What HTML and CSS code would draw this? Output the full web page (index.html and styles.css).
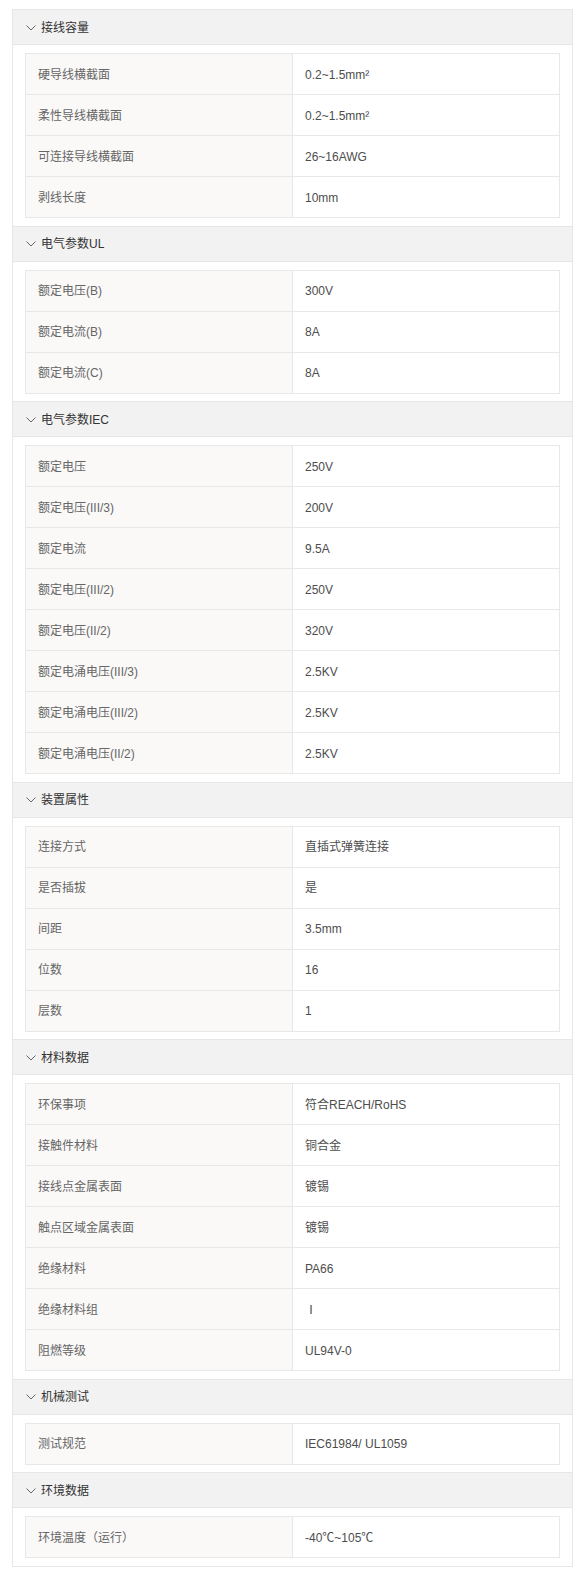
FILE: index.html
```html
<!DOCTYPE html>
<html lang="zh">
<head>
    <meta charset="UTF-8">
    <meta name="viewport" content="width=device-width, initial-scale=1.0">
    <title>技术参数</title>
    <link rel="stylesheet" href="styles.css">
</head>
<body>
    <div class="spec">
        <div class="group">
            <div class="group-head"><svg class="chev" viewBox="0 0 10 6"><polyline points="0.5,0.5 5,5 9.5,0.5"/></svg><span>接线容量</span></div>
            <div class="group-body">
                <table class="spec-table">
                    <tr><td class="k">硬导线横截面</td><td class="v">0.2~1.5mm²</td></tr>
                    <tr><td class="k">柔性导线横截面</td><td class="v">0.2~1.5mm²</td></tr>
                    <tr><td class="k">可连接导线横截面</td><td class="v">26~16AWG</td></tr>
                    <tr><td class="k">剥线长度</td><td class="v">10mm</td></tr>
                </table>
            </div>
        </div>
        <div class="group">
            <div class="group-head"><svg class="chev" viewBox="0 0 10 6"><polyline points="0.5,0.5 5,5 9.5,0.5"/></svg><span>电气参数UL</span></div>
            <div class="group-body">
                <table class="spec-table">
                    <tr><td class="k">额定电压(B)</td><td class="v">300V</td></tr>
                    <tr><td class="k">额定电流(B)</td><td class="v">8A</td></tr>
                    <tr><td class="k">额定电流(C)</td><td class="v">8A</td></tr>
                </table>
            </div>
        </div>
        <div class="group">
            <div class="group-head"><svg class="chev" viewBox="0 0 10 6"><polyline points="0.5,0.5 5,5 9.5,0.5"/></svg><span>电气参数IEC</span></div>
            <div class="group-body">
                <table class="spec-table">
                    <tr><td class="k">额定电压</td><td class="v">250V</td></tr>
                    <tr><td class="k">额定电压(III/3)</td><td class="v">200V</td></tr>
                    <tr><td class="k">额定电流</td><td class="v">9.5A</td></tr>
                    <tr><td class="k">额定电压(III/2)</td><td class="v">250V</td></tr>
                    <tr><td class="k">额定电压(II/2)</td><td class="v">320V</td></tr>
                    <tr><td class="k">额定电涌电压(III/3)</td><td class="v">2.5KV</td></tr>
                    <tr><td class="k">额定电涌电压(III/2)</td><td class="v">2.5KV</td></tr>
                    <tr><td class="k">额定电涌电压(II/2)</td><td class="v">2.5KV</td></tr>
                </table>
            </div>
        </div>
        <div class="group">
            <div class="group-head"><svg class="chev" viewBox="0 0 10 6"><polyline points="0.5,0.5 5,5 9.5,0.5"/></svg><span>装置属性</span></div>
            <div class="group-body">
                <table class="spec-table">
                    <tr><td class="k">连接方式</td><td class="v">直插式弹簧连接</td></tr>
                    <tr><td class="k">是否插拔</td><td class="v">是</td></tr>
                    <tr><td class="k">间距</td><td class="v">3.5mm</td></tr>
                    <tr><td class="k">位数</td><td class="v">16</td></tr>
                    <tr><td class="k">层数</td><td class="v">1</td></tr>
                </table>
            </div>
        </div>
        <div class="group">
            <div class="group-head"><svg class="chev" viewBox="0 0 10 6"><polyline points="0.5,0.5 5,5 9.5,0.5"/></svg><span>材料数据</span></div>
            <div class="group-body">
                <table class="spec-table">
                    <tr><td class="k">环保事项</td><td class="v">符合REACH/RoHS</td></tr>
                    <tr><td class="k">接触件材料</td><td class="v">铜合金</td></tr>
                    <tr><td class="k">接线点金属表面</td><td class="v">镀锡</td></tr>
                    <tr><td class="k">触点区域金属表面</td><td class="v">镀锡</td></tr>
                    <tr><td class="k">绝缘材料</td><td class="v">PA66</td></tr>
                    <tr><td class="k">绝缘材料组</td><td class="v">Ⅰ</td></tr>
                    <tr><td class="k">阻燃等级</td><td class="v">UL94V-0</td></tr>
                </table>
            </div>
        </div>
        <div class="group">
            <div class="group-head"><svg class="chev" viewBox="0 0 10 6"><polyline points="0.5,0.5 5,5 9.5,0.5"/></svg><span>机械测试</span></div>
            <div class="group-body">
                <table class="spec-table">
                    <tr><td class="k">测试规范</td><td class="v">IEC61984/ UL1059</td></tr>
                </table>
            </div>
        </div>
        <div class="group">
            <div class="group-head"><svg class="chev" viewBox="0 0 10 6"><polyline points="0.5,0.5 5,5 9.5,0.5"/></svg><span>环境数据</span></div>
            <div class="group-body">
                <table class="spec-table">
                    <tr><td class="k">环境温度（运行）</td><td class="v">-40℃~105℃</td></tr>
                </table>
            </div>
        </div>
    </div>
</body>
</html>
```

FILE: styles.css
```css
* { box-sizing: border-box; }

body {
    margin: 0;
    background: #fff;
    font-family: "Liberation Sans", Arial, "Noto Sans CJK SC", sans-serif;
    font-size: 12px;
    color: #666;
}

.spec {
    margin: 9px 8px 0 12px;
    border: 1px solid #e6e6e6;
}

.group-head {
    display: flex;
    align-items: center;
    height: 35px;
    padding: 1px 0 0 13px;
    background: #f2f2f2;
    border-bottom: 1px solid #e6e6e6;
    color: #333;
    line-height: 14px;
}

.group + .group .group-head {
    height: 36px;
    border-top: 1px solid #e6e6e6;
}

.chev {
    width: 10px;
    height: 6px;
    margin-right: 5px;
    fill: none;
    stroke: #666;
    stroke-width: 1;
}

.group-body {
    padding: 8px 12px 7.5px;
}

.spec-table {
    width: 100%;
    border-collapse: collapse;
    table-layout: fixed;
}

.spec-table td {
    height: 41px;
    padding: 1px 12px 0;
    line-height: 14px;
    border: 1px solid #e8e8e8;
    vertical-align: middle;
}

.spec-table .k {
    background: #faf9f8;
    color: #666;
}

.spec-table .v {
    background: #fff;
    color: #4d4d4d;
}
```
